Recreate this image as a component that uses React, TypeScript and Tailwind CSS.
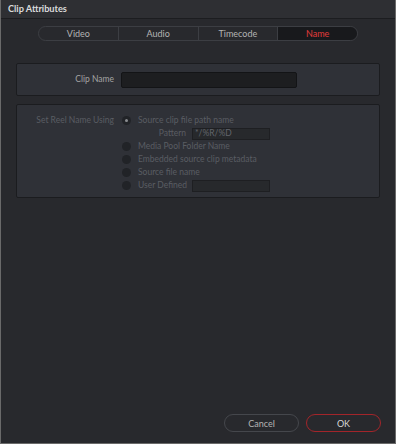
const font = { fontFamily: 'Lato, "Open Sans", sans-serif' };

const tabs = ["Video", "Audio", "Timecode", "Name"];

const options = [
  { label: "Media Pool Folder Name" },
  { label: "Embedded source clip metadata" },
  { label: "Source file name" },
  { label: "User Defined", input: true },
];

const Radio = ({ checked }: { checked?: boolean }) => (
  <span className="w-[9px] h-[9px] rounded-full bg-[#212327] flex items-center justify-center shrink-0">
    {checked && <span className="w-[3px] h-[3px] rounded-full bg-[#8a8c90]" />}
  </span>
);

const App = () => {
  return (
    <div style={font} className="w-[396px] h-[444px] bg-[#28292d] border-x border-b border-[#6a6a6a] flex flex-col overflow-hidden">
      <div className="h-[19px] bg-[#2e2f33] border-b border-[#1c1d20] flex items-center pl-[7px] shrink-0">
        <span className="text-[9.2px] font-bold text-[#dcdcdc] leading-none">Clip Attributes</span>
      </div>

      <div className="flex justify-center pt-[7px]">
        <div className="flex w-[320px] h-[15px] rounded-full border border-[#3c3e43] overflow-hidden">
          {tabs.map((t, i) => (
            <div
              key={t}
              className={
                "flex-1 flex items-center justify-center text-[9px] leading-none " +
                (i > 0 ? "border-l border-[#3c3e43] " : "") +
                (t === "Name" ? "bg-[#18191c] text-[#e23b3b]" : "text-[#b4b4b4]")
              }
            >
              {t}
            </div>
          ))}
        </div>
      </div>

      <div className="mx-[15px] mt-[22px] h-[33px] bg-[#2f3137] border border-[#1b1c1f] rounded-[2px] flex items-center">
        <span className="w-[97px] text-right text-[8.5px] text-[#a4a4a4]">Clip Name</span>
        <div className="ml-[7px] w-[176px] h-[16px] bg-[#1d1e20] border border-[#131416] rounded-[2px]" />
      </div>

      <div className="mx-[15px] mt-[8px] h-[94px] bg-[#2f3137] border border-[#1b1c1f] rounded-[2px] flex pt-[9px] text-[8.5px] text-[#5a5d63] whitespace-nowrap">
        <span className="w-[97px] text-right leading-[13px]">Set Reel Name Using</span>
        <div className="ml-[8px] flex flex-col">
          <div className="flex items-center gap-[7px] h-[13px]">
            <Radio checked />
            <span>Source clip file path name</span>
          </div>
          <div className="flex items-center h-[13px]">
            <span className="w-[64px] text-right">Pattern</span>
            <div className="ml-[6px] w-[78px] h-[12px] bg-[#27292c] border border-[#1e1f22] flex items-center px-[2px] text-[#62656b]">
              */%R/%D
            </div>
          </div>
          {options.map((o) => (
            <div key={o.label} className="flex items-center gap-[7px] h-[13px]">
              <Radio />
              <span className={o.input ? "w-[47px]" : ""}>{o.label}</span>
              {o.input && <div className="w-[78px] h-[12px] bg-[#27292c] border border-[#1e1f22]" />}
            </div>
          ))}
        </div>
      </div>

      <div className="mt-auto mb-[11px] mr-[14px] flex justify-end gap-[7px]">
        <button className="w-[75px] h-[18px] rounded-full border border-[#45474c] text-[9px] text-[#b4b4b4] leading-none">
          Cancel
        </button>
        <button className="w-[75px] h-[18px] rounded-full border border-[#a3252a] text-[9px] text-[#d8d8d8] leading-none">
          OK
        </button>
      </div>
    </div>
  );
};

export default App;
